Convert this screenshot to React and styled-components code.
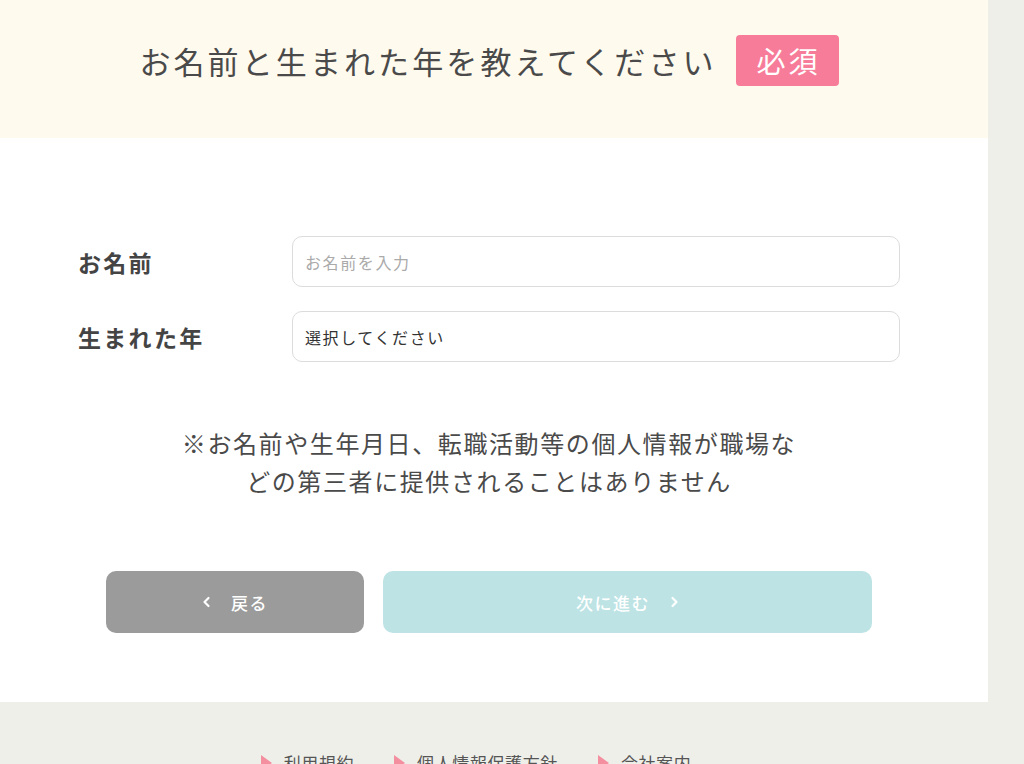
import React from 'react';
import styled, { createGlobalStyle } from 'styled-components';

const GlobalStyle = createGlobalStyle`
  html, body {
    margin: 0;
    padding: 0;
    background: #efefea;
    font-family: "Noto Sans CJK JP", "Noto Sans", sans-serif;
    color: #4a4a4a;
  }
  * { box-sizing: border-box; }
`

const Page = styled.div`
  width: 988px;
  background: #fff;
`

const Header = styled.header`
  height: 138px;
  background: #fffaee;
  display: flex;
  align-items: center;
  justify-content: center;
  gap: 19px;
  padding: 0 10px 18px 0;
`

const Title = styled.h1`
  margin: 0;
  font-size: 31px;
  font-weight: 400;
  letter-spacing: 3.1px;
  color: #4a4a4a;
  line-height: 1;
`

const Badge = styled.span`
  display: inline-flex;
  align-items: center;
  justify-content: center;
  width: 103px;
  height: 51px;
  border-radius: 4px;
  background: #f77c99;
  color: #fff;
  font-size: 29px;
  letter-spacing: 3px;
  padding-left: 3px;
`

const Body = styled.main`
  padding: 98px 88px 69px 78px;
`

const Form = styled.div`
  display: flex;
  flex-direction: column;
  gap: 24px;
`

const Row = styled.label`
  display: grid;
  grid-template-columns: 214px 1fr;
  align-items: center;
`

const Label = styled.span`
  font-size: 23px;
  font-weight: 700;
  letter-spacing: 2.3px;
  color: #444;
`

const fieldCss = `
  width: 100%;
  height: 51px;
  border: 1px solid #dcdcdc;
  border-radius: 10px;
  background: #fff;
  padding: 0 12px;
  font-family: "Noto Sans CJK JP", "Noto Sans", sans-serif;
  font-size: 16px;
  letter-spacing: 1.6px;
  outline: none;
`

const TextInput = styled.input`
  ${fieldCss}
  color: #333;
  &::placeholder { color: #aaa; }
`

const Select = styled.select`
  ${fieldCss}
  appearance: none;
  -webkit-appearance: none;
  color: #333;
`

const Note = styled.p`
  margin: 62px auto 0;
  max-width: 625px;
  text-align: center;
  font-size: 24px;
  line-height: 38px;
  letter-spacing: 1.6px;
  color: #4a4a4a;
`

const Buttons = styled.div`
  width: 766px;
  margin: 71px auto 0;
  display: grid;
  grid-template-columns: 258px 1fr;
  gap: 19px;
`

const Button = styled.button`
  height: 62px;
  border: none;
  border-radius: 10px;
  background: ${p => p.$variant === 'next' ? '#bde3e4' : '#9b9b9b'};
  color: #fff;
  font-family: "Noto Sans CJK JP", "Noto Sans", sans-serif;
  font-size: 17px;
  font-weight: 500;
  letter-spacing: 1.5px;
  display: flex;
  align-items: center;
  justify-content: center;
  gap: 20px;
  cursor: pointer;
`

const Chevron = ({ dir }) => (
  <svg width="9" height="12" viewBox="0 0 9 12">
    <path
      d={dir === 'left' ? 'M6.5 2 L2.5 6 L6.5 10' : 'M2.5 2 L6.5 6 L2.5 10'}
      fill="none"
      stroke="#fff"
      strokeWidth="2.2"
      strokeLinecap="round"
      strokeLinejoin="round"
    />
  </svg>
)

const Footer = styled.footer`
  display: flex;
  justify-content: center;
  gap: 40px;
  padding: 48px 72px 40px 0;
`

const FooterLink = styled.a`
  display: flex;
  align-items: center;
  gap: 12px;
  font-size: 17px;
  letter-spacing: 0.6px;
  color: #555;
  text-decoration: none;
  &::before {
    content: "";
    width: 0;
    height: 0;
    border-top: 8px solid transparent;
    border-bottom: 8px solid transparent;
    border-left: 11px solid #f48fa0;
  }
`

export default function App() {
  return (
    <>
      <GlobalStyle />
      <Page>
        <Header>
          <Title>お名前と生まれた年を教えてください</Title>
          <Badge>必須</Badge>
        </Header>
        <Body>
          <Form>
            <Row>
              <Label>お名前</Label>
              <TextInput placeholder="お名前を入力" />
            </Row>
            <Row>
              <Label>生まれた年</Label>
              <Select defaultValue="">
                <option value="">選択してください</option>
              </Select>
            </Row>
          </Form>
          <Note>※お名前や生年月日、転職活動等の個人情報が職場などの第三者に提供されることはありません</Note>
          <Buttons>
            <Button $variant="back">
              <Chevron dir="left" />
              戻る
            </Button>
            <Button $variant="next">
              次に進む
              <Chevron dir="right" />
            </Button>
          </Buttons>
        </Body>
      </Page>
      <Footer>
        <FooterLink href="#">利用規約</FooterLink>
        <FooterLink href="#">個人情報保護方針</FooterLink>
        <FooterLink href="#">会社案内</FooterLink>
      </Footer>
    </>
  );
}
